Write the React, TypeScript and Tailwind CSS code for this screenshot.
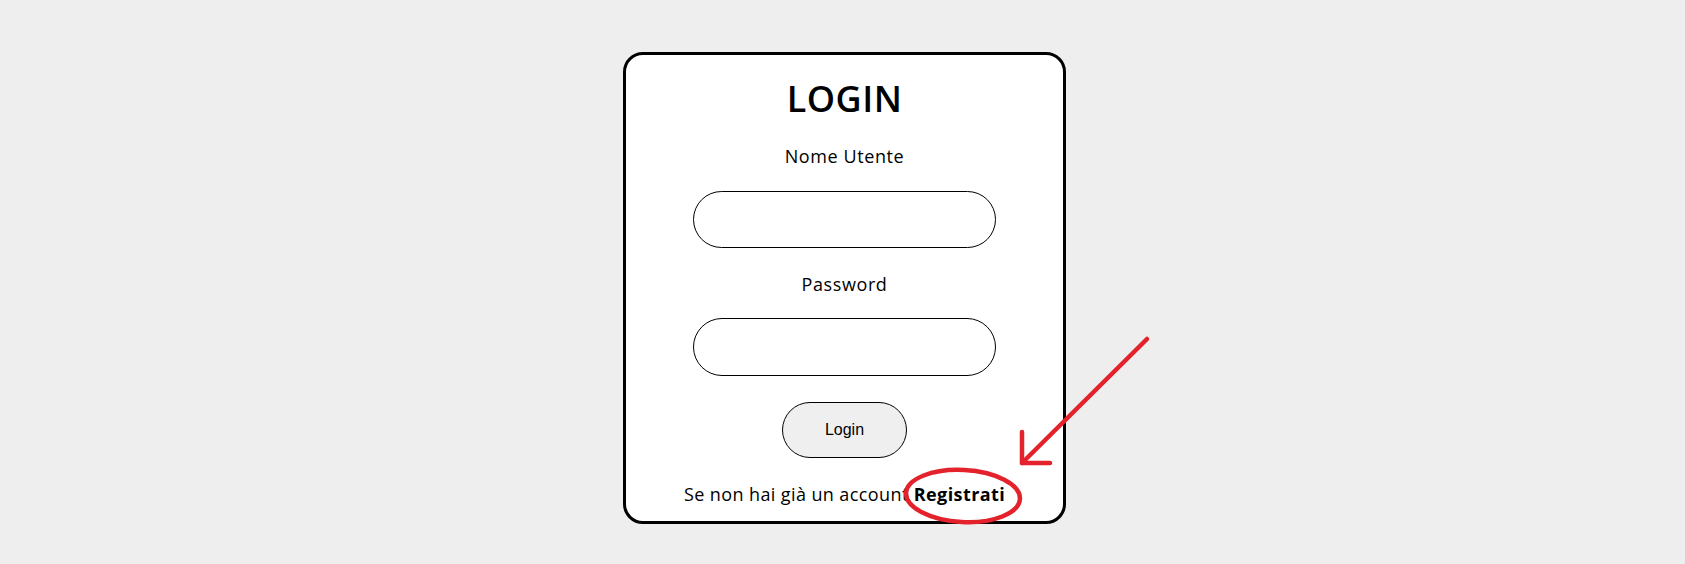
import React from 'react';

// Annotation drawn over the page: red arrow + circle round "Registrati"
const Annotation: React.FC = () => (
  <svg
    className="absolute inset-0 pointer-events-none"
    width="1685"
    height="564"
    viewBox="0 0 1685 564"
  >
    <g fill="none" stroke="#e3222c" strokeWidth="4.5" strokeLinecap="round" strokeLinejoin="round">
      <ellipse cx="963" cy="496" rx="57" ry="26" transform="rotate(3 963 496)" />
      <path d="M1147 339 L1022 463" />
      <path d="M1022 432 L1022 463 L1050 463" />
    </g>
  </svg>
);

const App: React.FC = () => {
  return (
    <div className="relative w-full h-[564px] bg-[#eeeeee] flex justify-center pl-[4px] pt-[52px] font-['Open_Sans',sans-serif] text-black">
      <div className="w-[443px] h-[472px] bg-white border-[3px] border-black rounded-[20px] flex flex-col items-center pt-[26px]">
        <h1 className="text-[36px] leading-[36px] font-semibold tracking-[0.5px]">LOGIN</h1>

        <label className="mt-[30px] text-[18px] leading-[18px] tracking-[0.6px]">Nome Utente</label>
        <input
          type="text"
          className="mt-[26px] w-[303px] h-[57px] rounded-full border border-black bg-white outline-none"
        />

        <label className="mt-[27px] text-[18px] leading-[18px] tracking-[0.6px]">Password</label>
        <input
          type="password"
          className="mt-[25px] w-[303px] h-[58px] rounded-full border border-black bg-white outline-none"
        />

        <button className="mt-[26px] w-[125px] h-[56px] rounded-[28px] border border-black bg-[#efefef] font-['Liberation_Sans',sans-serif] text-[16px]">
          Login
        </button>

        <p className="mt-[27px] text-[18px] leading-[18px] tracking-[0.4px]">
          Se non hai già un account <span className="font-bold">Registrati</span>
        </p>
      </div>
      <Annotation />
    </div>
  );
};

export default App;
